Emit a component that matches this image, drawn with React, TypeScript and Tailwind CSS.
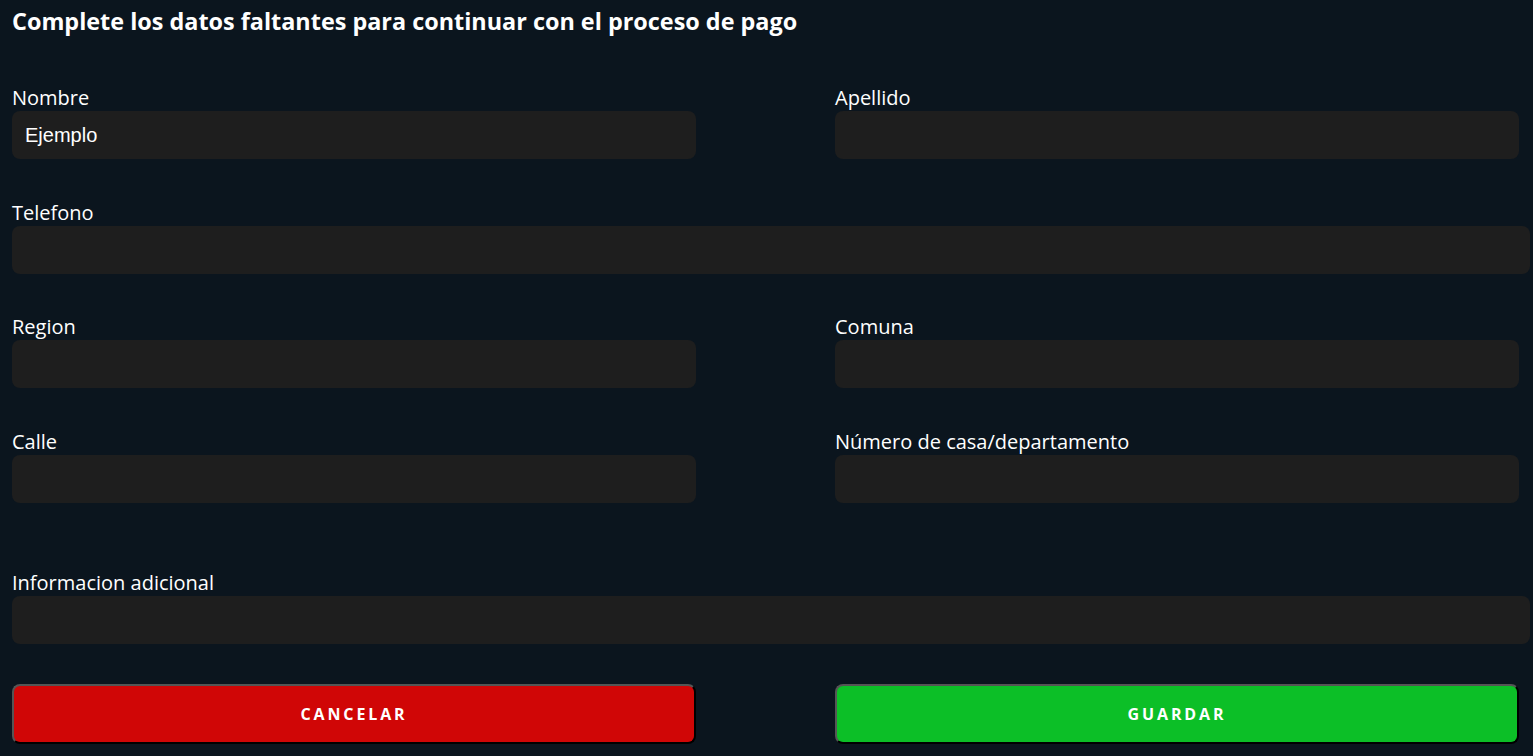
import React from 'react';

type FieldProps = {
  label: string;
  value?: string;
  className?: string;
};

const Field: React.FC<FieldProps> = ({ label, value, className }) => (
  <div className={`flex flex-col ${className ?? ''}`}>
    <label className="text-[20px] leading-[27px] text-white">{label}</label>
    <input
      type="text"
      defaultValue={value}
      className="h-12 w-full rounded-lg bg-[#1e1e1e] px-[13px] text-[20px] text-white outline-none font-['Liberation_Sans',Arial,sans-serif]"
    />
  </div>
);

const App: React.FC = () => {
  return (
    <div className="min-h-[756px] bg-[#0b151e] pl-3 pr-[3px] pt-[7px] font-['Open_Sans',sans-serif] text-white">
      <h1 className="text-[23.4px] font-bold leading-7">
        Complete los datos faltantes para continuar con el proceso de pago
      </h1>

      {/* left col / gutter / right col / leftover */}
      <div className="mt-[49px] grid grid-cols-[684px_139px_684px_1fr] gap-y-[39.5px]">
        <Field label="Nombre" value="Ejemplo" className="col-start-1" />
        <Field label="Apellido" className="col-start-3" />

        <Field label="Telefono" className="col-span-4" />

        <Field label="Region" className="col-start-1" />
        <Field label="Comuna" className="col-start-3" />

        <Field label="Calle" className="col-start-1" />
        <Field label="Número de casa/departamento" className="col-start-3" />

        <Field label="Informacion adicional" className="col-span-4 mt-[27px]" />

        <button className="col-start-1 h-[60px] rounded-lg border-2 border-t-[#555] border-l-[#555] border-b-black border-r-black bg-[#d00606] text-[16px] font-bold tracking-[0.18em] text-white">
          CANCELAR
        </button>
        <button className="col-start-3 h-[60px] rounded-lg border-2 border-t-[#555] border-l-[#555] border-b-black border-r-black bg-[#0cbf27] text-[16px] font-bold tracking-[0.18em] text-white">
          GUARDAR
        </button>
      </div>
    </div>
  );
};

export default App;
